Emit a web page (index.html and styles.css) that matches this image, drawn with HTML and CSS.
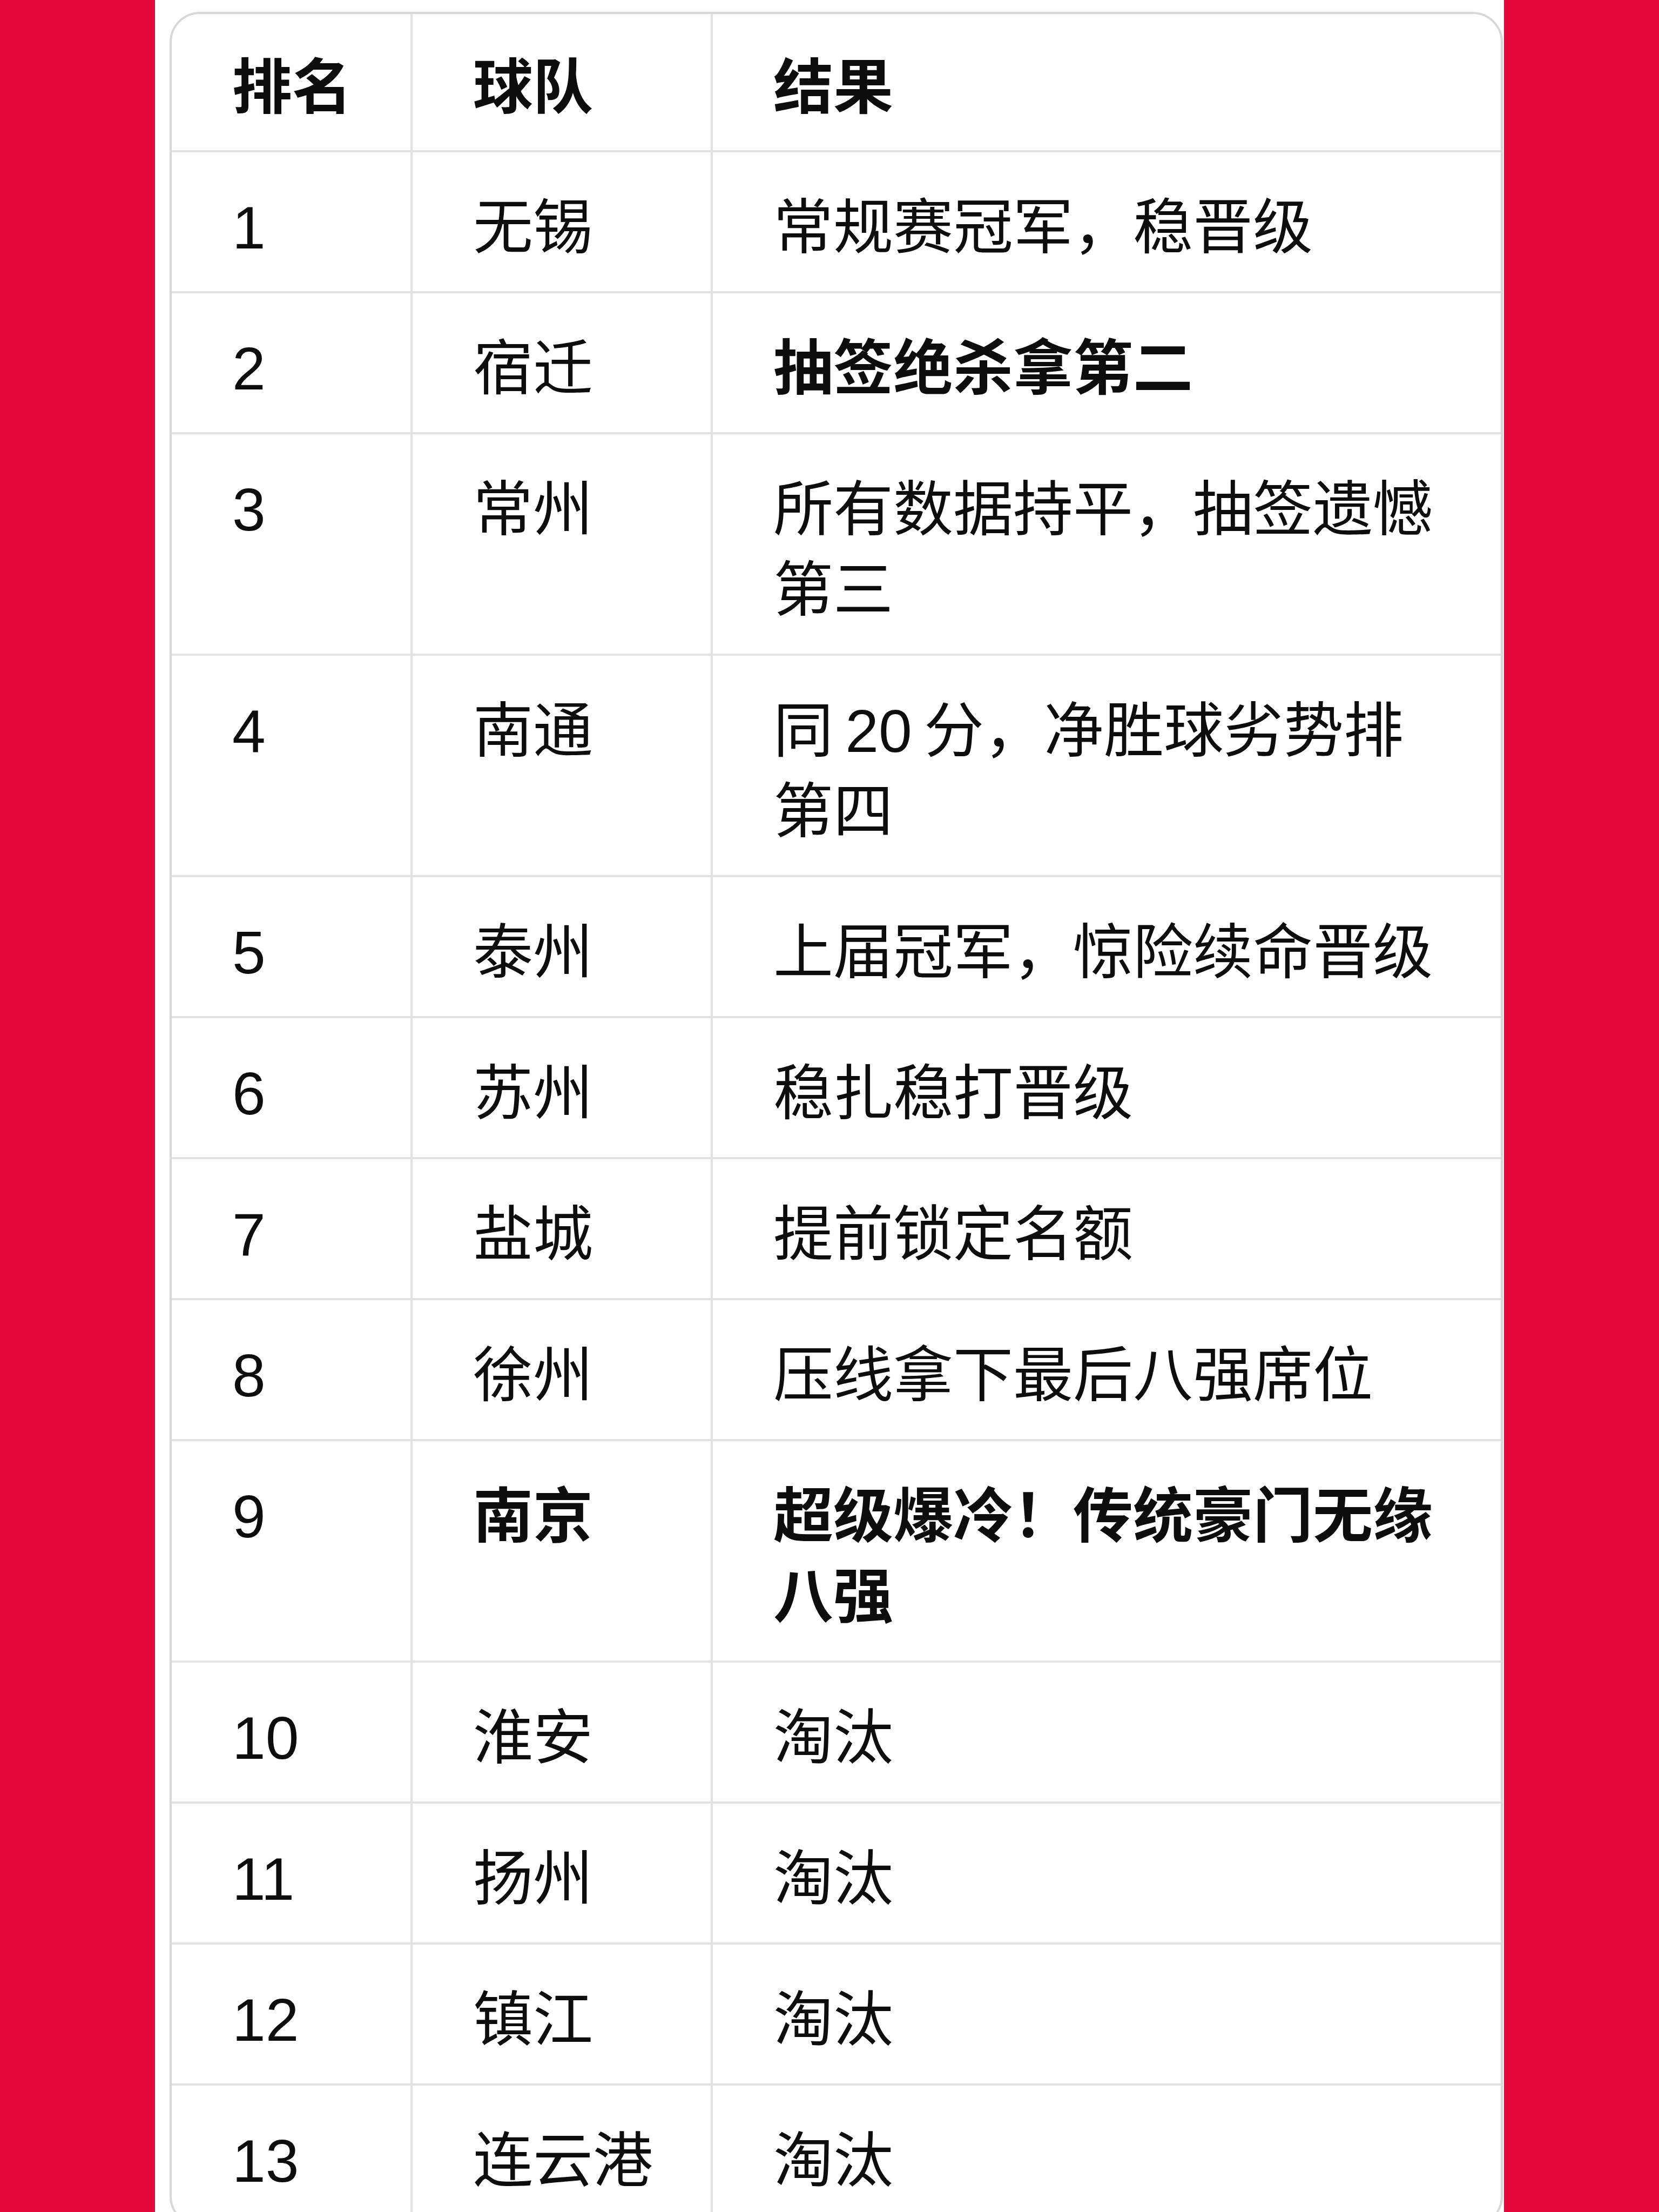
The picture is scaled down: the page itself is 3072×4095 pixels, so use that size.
FILE: index.html
```html
<!DOCTYPE html>
<html lang="zh-CN">
<head>
<meta charset="utf-8">
<title>排名</title>
<link rel="stylesheet" href="styles.css">
</head>
<body>
<div class="page">
  <div class="panel">
    <table class="standings">
      <colgroup>
        <col class="col-rank">
        <col class="col-team">
        <col class="col-result">
      </colgroup>
      <thead>
        <tr><th>排名</th><th>球队</th><th>结果</th></tr>
      </thead>
      <tbody>
        <tr><td>1</td><td>无锡</td><td>常规赛冠军，稳晋级</td></tr>
        <tr><td>2</td><td>宿迁</td><td class="strong">抽签绝杀拿第二</td></tr>
        <tr><td>3</td><td>常州</td><td>所有数据持平，抽签遗憾第三</td></tr>
        <tr><td>4</td><td>南通</td><td>同&#8201;20&#8201;分，净胜球劣势排第四</td></tr>
        <tr><td>5</td><td>泰州</td><td>上届冠军，惊险续命晋级</td></tr>
        <tr><td>6</td><td>苏州</td><td>稳扎稳打晋级</td></tr>
        <tr><td>7</td><td>盐城</td><td>提前锁定名额</td></tr>
        <tr><td>8</td><td>徐州</td><td>压线拿下最后八强席位</td></tr>
        <tr><td>9</td><td class="strong">南京</td><td class="strong">超级爆冷！传统豪门无缘八强</td></tr>
        <tr><td>10</td><td>淮安</td><td>淘汰</td></tr>
        <tr><td>11</td><td>扬州</td><td>淘汰</td></tr>
        <tr><td>12</td><td>镇江</td><td>淘汰</td></tr>
        <tr class="last"><td>13</td><td>连云港</td><td>淘汰</td></tr>
      </tbody>
    </table>
  </div>
</div>
</body>
</html>
```
FILE: styles.css
```css
html, body {
  margin: 0;
  padding: 0;
}

body {
  background: #e6083b;
  font-family: "Liberation Sans", "Noto Sans CJK SC", sans-serif;
  color: #0d0d0d;
}

.page {
  height: 100vh;
  overflow: hidden;
}

.panel {
  width: 2498px;
  height: 100vh;
  margin: 0 auto;
  box-sizing: border-box;
  padding: 22px 2px 0 27px;
  background: #ffffff;
  overflow: hidden;
}

.standings {
  width: 2469px;
  table-layout: fixed;
  border-collapse: separate;
  border-spacing: 0;
  border: 4px solid #d8d8d8;
  border-radius: 56px;
  background: #ffffff;
  font-size: 111px;
  line-height: 149px;
}

.col-rank { width: 446px; }
.col-team { width: 556px; }

.standings th,
.standings td {
  box-sizing: border-box;
  padding: 66px 30px 42px 112px;
  text-align: left;
  vertical-align: top;
  border-right: 4px solid #e2e2e2;
  border-bottom: 4px solid #e2e2e2;
  word-break: break-all;
}

.standings th {
  font-weight: 700;
  padding-top: 63px;
  padding-bottom: 40px;
}

.standings td {
  font-weight: 400;
}

.standings th:last-child,
.standings td:last-child {
  border-right: none;
  padding-right: 112px;
}

.standings tr.last td {
  border-bottom: none;
}

.standings td.strong {
  font-weight: 700;
}
```
